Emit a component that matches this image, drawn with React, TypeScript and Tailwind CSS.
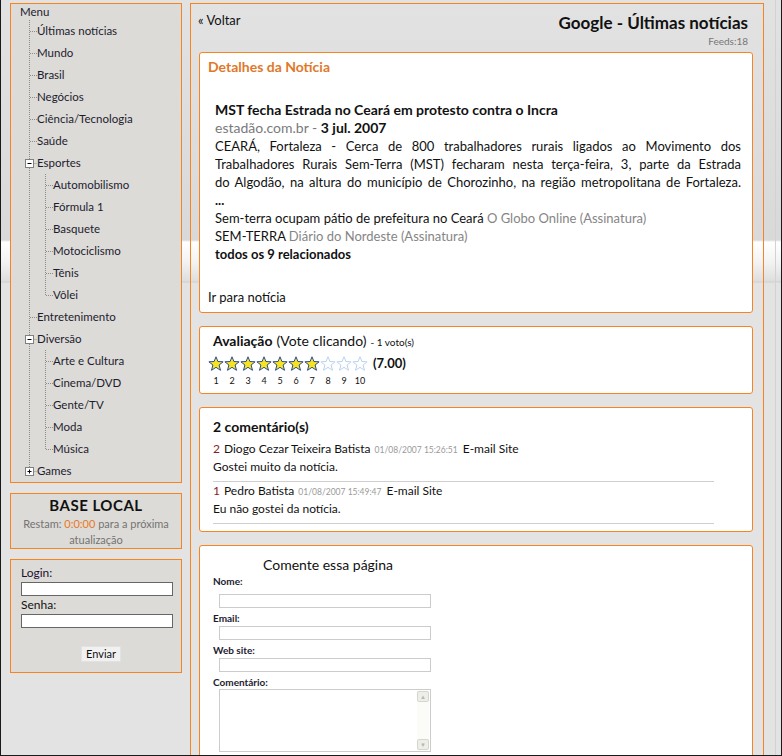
import React from 'react';

type MenuItem = {
    label: string;
    toggle?: 'open' | 'closed';
    children?: string[];
};

const menu: MenuItem[] = [
    { label: 'Últimas notícias' },
    { label: 'Mundo' },
    { label: 'Brasil' },
    { label: 'Negócios' },
    { label: 'Ciência/Tecnologia' },
    { label: 'Saúde' },
    {
        label: 'Esportes',
        toggle: 'open',
        children: ['Automobilismo', 'Fórmula 1', 'Basquete', 'Motociclismo', 'Tênis', 'Vôlei'],
    },
    { label: 'Entretenimento' },
    {
        label: 'Diversão',
        toggle: 'open',
        children: ['Arte e Cultura', 'Cinema/DVD', 'Gente/TV', 'Moda', 'Música'],
    },
    { label: 'Games', toggle: 'closed' },
];

function Toggle({ x, open }: { x: number; open: boolean }) {
    return (
        <g>
            <rect x={x - 4} y={7.5} width={8} height={8} fill="#ffffff" stroke="#808080" />
            <line x1={x - 2} y1={11.5} x2={x + 2} y2={11.5} stroke="#000" />
            {!open && <line x1={x} y1={9.5} x2={x} y2={13.5} stroke="#000" />}
        </g>
    );
}

function TreeRow({
    label,
    depth,
    last,
    toggle,
}: {
    label: string;
    depth: 0 | 1;
    last: boolean;
    toggle?: 'open' | 'closed';
}) {
    const dot = { stroke: '#8c8c8c', strokeDasharray: '1 1' };
    return (
        <div className="flex h-[22px] items-center">
            {depth === 0 ? (
                <svg width="26" height="22" className="shrink-0">
                    <line x1={18.5} y1={0} x2={18.5} y2={last ? 11.5 : 22} {...dot} />
                    <line x1={toggle ? 22.5 : 19} y1={11.5} x2={26} y2={11.5} {...dot} />
                    {toggle && <Toggle x={18.5} open={toggle === 'open'} />}
                </svg>
            ) : (
                <svg width="42" height="22" className="shrink-0">
                    <line x1={18.5} y1={0} x2={18.5} y2={22} {...dot} />
                    <line x1={34.5} y1={0} x2={34.5} y2={last ? 11.5 : 22} {...dot} />
                    <line x1={35} y1={11.5} x2={42} y2={11.5} {...dot} />
                </svg>
            )}
            <span className="text-[11.5px] text-[#1c1c30] whitespace-nowrap">{label}</span>
        </div>
    );
}

function Star({ filled }: { filled: boolean }) {
    return (
        <svg width="16" height="16" viewBox="0 0 16 16" className="shrink-0">
            <polygon
                points="8,0.8 9.9,5.5 15.1,5.8 11.1,9 12.5,14.3 8,11.3 3.5,14.3 4.9,9 0.9,5.8 6.1,5.5"
                fill={filled ? '#f7e51b' : '#ffffff'}
                stroke={filled ? '#2a4aa0' : '#b9d3ef'}
                strokeWidth="1"
                strokeLinejoin="round"
            />
        </svg>
    );
}

function Comment({ n, name, date, text }: { n: number; name: string; date: string; text: string }) {
    return (
        <div>
            <div className="flex items-baseline h-[18px] leading-[18px] text-[12px] text-[#111]">
                <span className="text-[#8a1c1c]">{n}</span>
                <span className="ml-[4px]">{name}</span>
                <span className="ml-[4px] text-[8.5px] text-[#9a9a9a]">{date}</span>
                <span className="ml-[5px]">E-mail Site</span>
            </div>
            <div className="text-[12px] leading-[18px] text-[#111]">{text}</div>
            <div className="mt-[5px] w-[501px] border-t border-[#cfcfcf]" />
        </div>
    );
}

export default function App() {
    const stars = [1, 2, 3, 4, 5, 6, 7, 8, 9, 10];

    return (
        <div className="relative w-[782px] h-[756px] overflow-hidden border-x border-b border-[#1a1a1a] font-[Lato,sans-serif] bg-[linear-gradient(to_bottom,#e2e2e2_0px,#d9d9d9_240px,#ffffff_242px,#f3f3f3_262px,#dedede_281px,#cfcfcf_282px,#e3e3e3_283px,#e3e3e3_100%)]">
            <div className="flex h-full">
                {/* coluna da esquerda */}
                <div className="pl-[9px] w-[181px] shrink-0">
                    <div className="mt-[3px] w-[172px] h-[480px] border border-[#f7841f] bg-[#dddbd7]">
                        <div className="pl-[9px] h-[16px] leading-[16px] text-[11.5px] text-[#1c1c30]">Menu</div>
                        <div>
                            {menu.map((item, i) => (
                                <React.Fragment key={item.label}>
                                    <TreeRow
                                        label={item.label}
                                        depth={0}
                                        last={i === menu.length - 1}
                                        toggle={item.toggle}
                                    />
                                    {item.children?.map((c, j) => (
                                        <TreeRow
                                            key={c}
                                            label={c}
                                            depth={1}
                                            last={j === item.children!.length - 1}
                                        />
                                    ))}
                                </React.Fragment>
                            ))}
                        </div>
                    </div>

                    <div className="mt-[10px] w-[172px] h-[56px] border border-[#f7841f] bg-[#dddbd7] text-center">
                        <div className="pt-[1px] leading-[20px] text-[15px] font-bold text-[#111] tracking-[0.5px]">BASE LOCAL</div>
                        <div className="mt-[1px] text-[11px] leading-[16px] text-[#737373]">
                            Restam: <span className="text-[#e8791f]">0:0:00</span> para a próxima
                            <br />
                            atualização
                        </div>
                    </div>

                    <div className="mt-[10px] w-[172px] h-[114px] border border-[#f7841f] bg-[#dddbd7] px-[10px] pt-[5px]">
                        <div className="text-[12px] leading-[16px] text-[#1c1030]">Login:</div>
                        <input className="block mt-[1px] w-[152px] h-[14px] border border-[#666] bg-white outline-none" />
                        <div className="mt-[1px] text-[12px] leading-[16px] text-[#111]">Senha:</div>
                        <input type="password" className="block mt-[1px] w-[152px] h-[14px] border border-[#666] bg-white outline-none" />
                        <div className="mt-[18px] pl-[60px] flex">
                            <button className="w-[40px] h-[16px] text-[11px] leading-[14px] text-[#111] bg-[#f1f1f1] border border-[#e2e2e2]">
                                Enviar
                            </button>
                        </div>
                    </div>
                </div>

                {/* painel principal */}
                <div className="ml-[8px] mt-[3px] w-[574px] shrink-0 border-x border-t border-[#f7841f]">
                    <div className="h-[48px] flex justify-between pl-[7px] pr-[15px]">
                        <div className="mt-[6px] text-[13px] leading-[20px] text-[#111]">« Voltar</div>
                        <div className="flex flex-col items-end mt-[8px]">
                            <div className="text-[17px] leading-[22px] font-bold text-[#111]">Google - Últimas notícias</div>
                            <div className="mt-[1px] text-[10px] leading-[12px] text-[#777]">Feeds:18</div>
                        </div>
                    </div>

                    {/* detalhes */}
                    <div className="ml-[8px] w-[554px] h-[261px] border border-[#f7841f] rounded-[3px] bg-white pt-[5px]">
                        <div className="pl-[8px] text-[14px] leading-[18px] font-bold text-[#e0782a]">Detalhes da Notícia</div>
                        <div className="mt-[25px] pl-[15px] pr-[11px] text-[13px] leading-[18px] text-[#111]">
                            <div className="text-[14px] font-bold">MST fecha Estrada no Ceará em protesto contra o Incra</div>
                            <div className="text-[14px]">
                                <span className="text-[#7a7a7a]">estadão.com.br - </span>
                                <span className="font-bold">3 jul. 2007</span>
                            </div>
                            <div className="w-[526px]">
                                <div className="whitespace-nowrap text-justify [text-align-last:justify]">
                                    CEARÁ, Fortaleza - Cerca de 800 trabalhadores rurais ligados ao Movimento dos
                                </div>
                                <div className="whitespace-nowrap text-justify [text-align-last:justify]">
                                    Trabalhadores Rurais Sem-Terra (MST) fecharam nesta terça-feira, 3, parte da Estrada
                                </div>
                                <div className="whitespace-nowrap text-justify [text-align-last:justify]">
                                    do Algodão, na altura do município de Chorozinho, na região metropolitana de Fortaleza.
                                </div>
                            </div>
                            <div className="font-bold">...</div>
                            <div>
                                Sem-terra ocupam pátio de prefeitura no Ceará{' '}
                                <span className="text-[#858585]">O Globo Online (Assinatura)</span>
                            </div>
                            <div>
                                SEM-TERRA <span className="text-[#858585]">Diário do Nordeste (Assinatura)</span>
                            </div>
                            <div className="font-bold">todos os 9 relacionados</div>
                        </div>
                        <div className="mt-[25px] pl-[8px] text-[13px] leading-[18px] text-[#111]">Ir para notícia</div>
                    </div>

                    {/* avaliação */}
                    <div className="mt-[13px] ml-[8px] w-[554px] h-[68px] border border-[#f7841f] rounded-[3px] bg-white pt-[5px] pl-[8px]">
                        <div className="pl-[5px] flex items-baseline leading-[18px] text-[#111]">
                            <span className="text-[14px] font-bold">Avaliação</span>
                            <span className="ml-[4px] text-[14px]">(Vote clicando)</span>
                            <span className="ml-[4px] text-[10px]">- 1 voto(s)</span>
                        </div>
                        <div className="mt-[5px] flex items-center h-[16px]">
                            {stars.map((s) => (
                                <Star key={s} filled={s <= 7} />
                            ))}
                            <span className="ml-[5px] text-[13px] font-bold text-[#111]">(7.00)</span>
                        </div>
                        <div className="mt-[3px] flex h-[11px] leading-[11px] text-[9px] text-[#111]">
                            {stars.map((s) => (
                                <span key={s} className="w-[16px] text-center">{s}</span>
                            ))}
                        </div>
                    </div>

                    {/* comentários */}
                    <div className="mt-[13px] ml-[8px] w-[554px] h-[125px] border border-[#f7841f] rounded-[3px] bg-white pt-[10px] pl-[13px]">
                        <div className="mb-[4px] text-[14px] leading-[18px] font-bold text-[#111]">2 comentário(s)</div>
                        <Comment n={2} name="Diogo Cezar Teixeira Batista" date="01/08/2007 15:26:51" text="Gostei muito da notícia." />
                        <Comment n={1} name="Pedro Batista" date="01/08/2007 15:49:47" text="Eu não gostei da notícia." />
                    </div>

                    {/* formulário */}
                    <div className="mt-[13px] ml-[8px] w-[554px] h-[260px] border border-[#f7841f] rounded-[3px] bg-white pt-[10px]">
                        <div className="pl-[63px] text-[14px] leading-[18px] text-[#111]">Comente essa página</div>
                        <div className="pl-[13px] text-[10px] leading-[12px] font-bold text-[#1c1c30]">
                            <div className="mt-[1px]">Nome:</div>
                            <input className="block ml-[6px] mt-[7px] w-[212px] h-[14px] border border-[#cccccc] outline-none" />
                            <div className="mt-[4px]">Email:</div>
                            <input className="block ml-[6px] mt-[2px] w-[212px] h-[14px] border border-[#cccccc] outline-none" />
                            <div className="mt-[4px]">Web site:</div>
                            <input className="block ml-[6px] mt-[2px] w-[212px] h-[14px] border border-[#cccccc] outline-none" />
                            <div className="mt-[4px]">Comentário:</div>
                            <div className="ml-[6px] mt-[1px] w-[212px] h-[63px] border border-[#cccccc] flex">
                                <div className="flex-1" />
                                <div className="w-[12px] mr-[1px] flex flex-col justify-between py-[1px] bg-[#fbfbf8]">
                                    <div className="h-[11px] rounded-[2px] border border-[#d6d6cf] bg-[#eeeee8] text-[6px] leading-[9px] text-center text-[#b8b8b0]">▲</div>
                                    <div className="h-[11px] rounded-[2px] border border-[#d6d6cf] bg-[#eeeee8] text-[6px] leading-[9px] text-center text-[#b8b8b0]">▼</div>
                                </div>
                            </div>
                        </div>
                    </div>
                </div>

                <div className="w-[11px] shrink-0" />
                <div className="w-[6px] shrink-0 border-l border-[#d2d2d2]" />
            </div>
        </div>
    );
}
